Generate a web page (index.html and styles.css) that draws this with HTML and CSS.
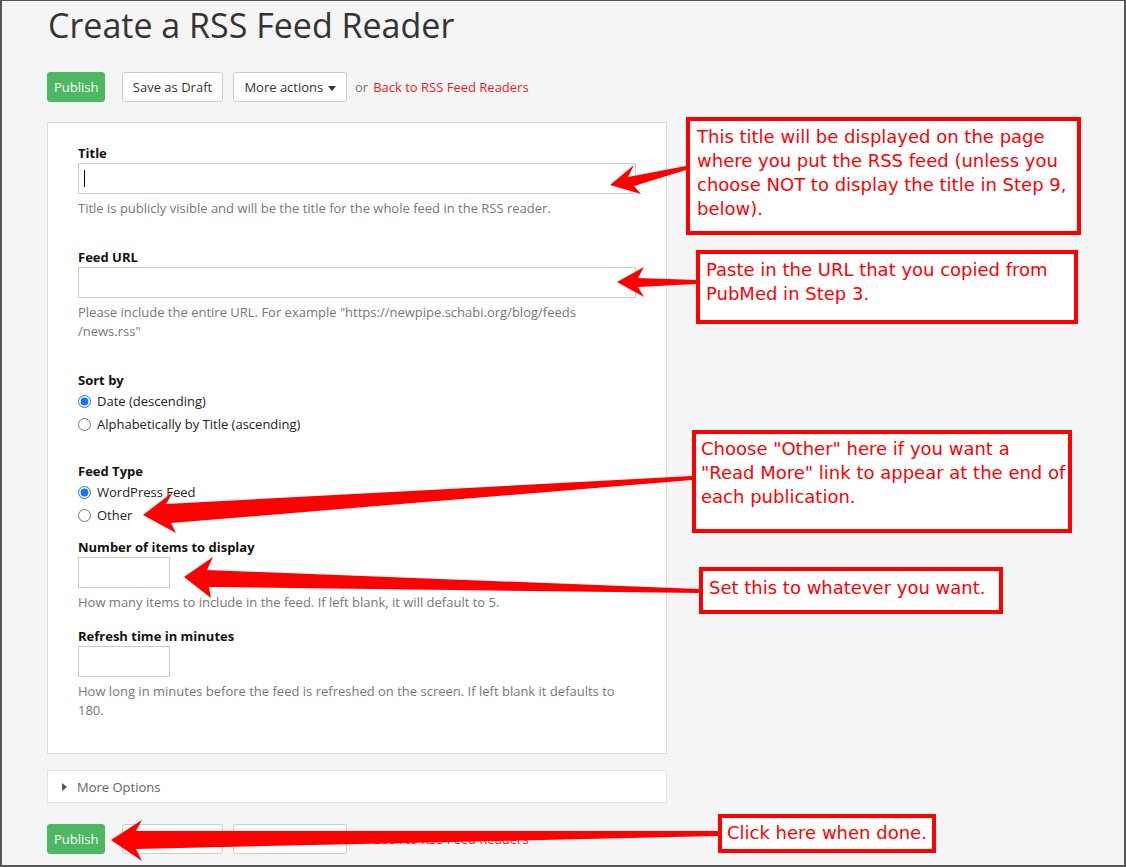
FILE: index.html
```html
<!DOCTYPE html>
<html lang="en">
  <head>
    <meta charset="UTF-8" />
    <meta name="viewport" content="width=device-width, initial-scale=1.0" />
    <title>Create a RSS Feed Reader</title>
    <link rel="stylesheet" href="styles.css">
  </head>
  <body>
    <div class="screen">
      <div class="page">
        <h1>Create a RSS Feed Reader</h1>

        <div class="actions">
          <button class="btn btn-publish">Publish</button>
          <button class="btn btn-draft">Save as Draft</button>
          <button class="btn btn-more">More actions <span class="caret"></span></button>
          <span class="or">or</span>
          <a href="#" class="back">Back to RSS Feed Readers</a>
        </div>

        <form class="panel">
          <div class="field">
            <label>Title</label>
            <div class="input-wrap">
              <input type="text" class="text-input" />
              <span class="cursor"></span>
            </div>
            <p class="help">Title is publicly visible and will be the title for the whole feed in the RSS reader.</p>
          </div>

          <div class="field field-url">
            <label>Feed URL</label>
            <input type="text" class="text-input" />
            <p class="help">Please include the entire URL. For example "https://newpipe.schabi.org/blog/feeds<br>/news.rss"</p>
          </div>

          <div class="field field-sort">
            <label>Sort by</label>
            <div class="radio"><input type="radio" name="sort" checked /> Date (descending)</div>
            <div class="radio"><input type="radio" name="sort" /> Alphabetically by Title (ascending)</div>
          </div>

          <div class="field field-type">
            <label>Feed Type</label>
            <div class="radio"><input type="radio" name="type" checked /> WordPress Feed</div>
            <div class="radio"><input type="radio" name="type" /> Other</div>
          </div>

          <div class="field field-count">
            <label>Number of items to display</label>
            <input type="text" class="text-input small" />
            <p class="help">How many items to include in the feed. If left blank, it will default to 5.</p>
          </div>

          <div class="field field-refresh">
            <label>Refresh time in minutes</label>
            <input type="text" class="text-input small" />
            <p class="help">How long in minutes before the feed is refreshed on the screen. If left blank it defaults to<br>180.</p>
          </div>
        </form>

        <div class="more-options">
          <span class="tri"></span>
          More Options
        </div>

        <div class="actions actions-bottom">
          <button class="btn btn-publish">Publish</button>
          <button class="btn btn-draft">Save as Draft</button>
          <button class="btn btn-more">More actions <span class="caret"></span></button>
          <span class="or">or</span>
          <a href="#" class="back">Back to RSS Feed Readers</a>
        </div>
      </div>

      <!-- annotation arrows -->
      <svg class="arrows" width="1126" height="867" viewBox="0 0 1126 867">
        <polygon points="610,185 634,165 628,177 686,166 686,170 634,186 641,194" />
        <polygon points="617,282 644,267 638,278 697,280 697,284 638,287 644,297" />
        <polygon points="143,515 173,492 166,504 692,476 692,480 171,523 176,533" />
        <polygon points="184,577 213,557 207,570 699,589 699,593 209,587 211,598" />
        <polygon points="111,840 142,820 136,831 718,831 718,836 136,849 142,861" />
      </svg>

      <div class="note note-title">This title will be displayed on the page where you put the RSS feed (unless you choose NOT to display the title in Step 9, below).</div>
      <div class="note note-url">Paste in the URL that you copied from PubMed in Step 3.</div>
      <div class="note note-type">Choose "Other" here if you want a "Read More" link to appear at the end of each publication.</div>
      <div class="note note-count">Set this to whatever you want.</div>
      <div class="note note-done">Click here when done.</div>
    </div>
  </body>
</html>
```

FILE: styles.css
```css
* {
  padding: 0;
  margin: 0;
  box-sizing: border-box;
}
body {
  font-family: "Open Sans", "Liberation Sans", sans-serif;
  font-size: 13px;
  color: #333;
}
.screen {
  width: 1126px;
  height: 867px;
  border: 2px solid #555;
  border-top-width: 1px;
  background: #f5f5f5;
  position: relative;
  overflow: hidden;
}
.page {
  padding-left: 45px;
  width: 665px;
}
h1 {
  font-size: 34px;
  font-weight: 400;
  line-height: 48px;
  color: #333;
  margin-bottom: 23px;
  padding-left: 1px;
}
.actions {
  display: flex;
  align-items: center;
  height: 30px;
}
.btn {
  height: 30px;
  font-family: inherit;
  font-size: 13px;
  border-radius: 3px;
  border: 1px solid #ccc;
  background: #fff;
  color: #333;
  padding: 0 6px;
  white-space: nowrap;
  cursor: pointer;
}
.btn-publish {
  width: 58px;
  background: #4cb862;
  border-color: #4cb862;
  color: #fff;
  margin-right: 17px;
}
.btn-draft {
  width: 101px;
  margin-right: 10px;
}
.btn-more {
  width: 114px;
}
.caret {
  display: inline-block;
  width: 0;
  height: 0;
  border-left: 4px solid transparent;
  border-right: 4px solid transparent;
  border-top: 5px solid #333;
  vertical-align: middle;
  margin-left: 1px;
}
.or {
  color: #777;
  margin-left: 8px;
  margin-right: 5px;
}
.back {
  color: #ec1c24;
  text-decoration: none;
}
.panel {
  margin-top: 20px;
  background: #fff;
  border: 1px solid #ddd;
  padding: 21px 30px 33px;
}
.field label {
  display: block;
  font-weight: 700;
  line-height: 18px;
  margin-bottom: 1px;
  color: #111;
}
.text-input {
  display: block;
  width: 100%;
  height: 31px;
  border: 1px solid #ccc;
  background: #fff;
  font-family: inherit;
}
.text-input.small {
  width: 92px;
}
.input-wrap {
  position: relative;
}
.cursor {
  position: absolute;
  left: 6px;
  top: 7px;
  width: 1px;
  height: 17px;
  background: #000;
}
.help {
  color: #777;
  line-height: 19px;
  margin-top: 5px;
}
.field-url {
  margin-top: 30px;
}
.field-sort {
  margin-top: 30px;
}
.field-type {
  margin-top: 26px;
}
.field-count {
  margin-top: 11px;
}
.field-refresh {
  margin-top: 15px;
}
.radio {
  display: flex;
  align-items: center;
  line-height: 23px;
  color: #222;
}
.radio input {
  width: 13px;
  height: 13px;
  margin: 0 6px 0 0;
  accent-color: #1a73e8;
}
.more-options {
  margin-top: 16px;
  background: #fff;
  border: 1px solid #e3e3e3;
  height: 33px;
  display: flex;
  align-items: center;
  padding-left: 14px;
  color: #666;
}
.tri {
  display: inline-block;
  width: 0;
  height: 0;
  border-top: 4px solid transparent;
  border-bottom: 4px solid transparent;
  border-left: 5px solid #555;
  margin-right: 10px;
}
.actions-bottom {
  margin-top: 21px;
}
.arrows {
  position: absolute;
  left: -2px;
  top: -1px;
}
.arrows polygon {
  fill: #ff0000;
}
.note {
  position: absolute;
  background: #fff;
  border: 4px solid #ff0000;
  color: #ff0000;
  font-family: "DejaVu Sans", sans-serif;
  font-size: 18px;
  line-height: 24px;
}
.note-title {
  left: 684px;
  top: 116px;
  width: 395px;
  height: 118px;
  padding: 4px 4px 4px 7px;
}
.note-url {
  left: 694px;
  top: 249px;
  width: 382px;
  height: 74px;
  padding: 4px 4px 4px 6px;
}
.note-type {
  left: 690px;
  top: 429px;
  width: 380px;
  height: 103px;
  padding: 3px 2px 3px 5px;
}
.note-count {
  left: 697px;
  top: 566px;
  width: 304px;
  height: 47px;
  padding: 5px 4px 5px 6px;
}
.note-done {
  left: 716px;
  top: 813px;
  width: 218px;
  height: 39px;
  padding: 3px 4px 3px 5px;
}
```
